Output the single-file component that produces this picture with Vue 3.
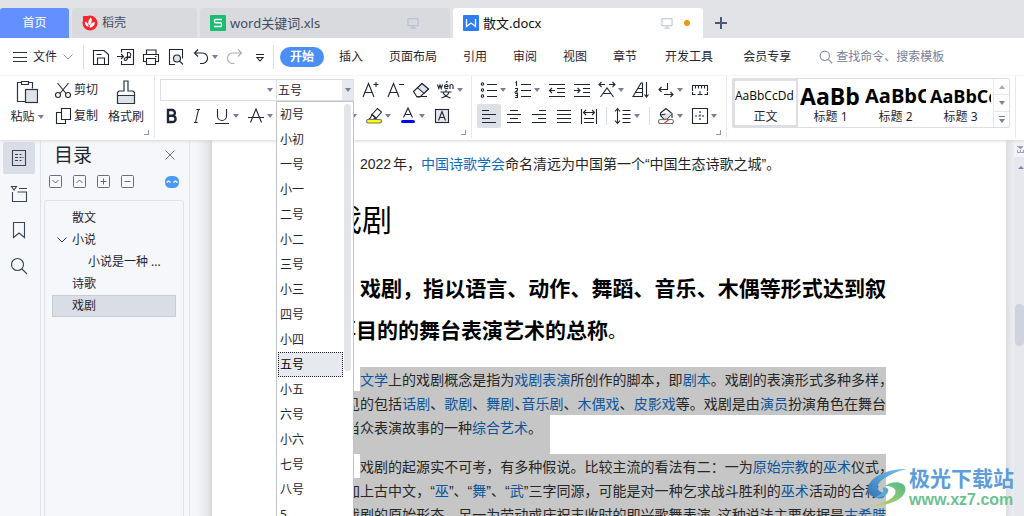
<script setup>
import { ref } from 'vue'

const icons = {
  save: '<path d="M1.500 16.500v-14h10.500l4.500 4v10z M5.500 16.500v-6.500h7v6.500 M4.500 6.500h5"/>',
  exportPdf: '<path d="M4.500 4.500v-3h12v15h-12v-3.500 M0 8.500h6.500 M4 6l2.500 2.500-2.500 2.500 M10.500 11v-6.500h1.500a2.300 2.300 0 0 1 0 4.500h-3 M10.500 9c0 5-4.500 4-3 1.500 .800-1.200 4-1.500 6.500-1"/>',
  print: '<path d="M4.500 6.500v-4.500h9.500v4.500 M4.500 13.500h-3v-7h15v7h-3 M4.500 10.500h9v6h-9z M13 8.500h1.500"/>',
  preview: '<path d="M8 16.500h-5.500v-15h13v9"/><circle cx="10" cy="10.500" r="3.500" fill="#dfe2e6"/><path d="M12.500 13l3.500 3.500"/>',
  undo: '<path d="M6 1.500l-3.500 3.500 3.500 3.500 M2.500 5h7a5 5 0 0 1 1.500 10.500h-3"/>',
  redo: '<path d="M12 1.500l3.500 3.500-3.500 3.500 M15.500 5h-8a5 5 0 0 0-1.500 10.500h2.500"/>',
  more: '<path d="M5 6.500h8 M6 9.500h6l-3 3.500z"/>',
  scissors: '<path d="M3.500 2l8.500 10.500 M14.500 2l-8.500 10.500"/><circle cx="4" cy="14" r="2.500"/><circle cx="14" cy="14" r="2.500"/>',
  copy: '<path d="M7.500 1.500h9v11h-9z M7.500 5.500h-5v11h9v-4"/>',
  grow: '<path d="M1 16l5.500-13.500 5.500 13.500 M3 11.500h7 M11.500 3.500h5 M14 1v5"/>',
  shrink: '<path d="M1 16l5.500-13.500 5.500 13.500 M3 11.500h7 M12 3.500h5"/>',
  eraser: '<path d="M1.500 10.500l8.500-8 6.500 5.500-8.500 8h-3z M5 15.500h10"/><path d="M5.500 6.800l4.500-4.300 6.500 5.500-4.500 4.300z" fill="#dfe2e6"/>',
  phonetic: '<path d="M.5 3.500l1.300 4 1.200-3.500 1.200 3.500 1.300-4 M7.500 5.500h3.500c0-2.800-3.500-2.500-3.500 0s2 2.800 3.500 1.500 M9 1.500l1.500-1.500 M13 8v-4.500 M13 5c0-2 3-2 3 0v3 M3.500 11h11 M9 9v2 M6 11.500c1.500 3 4 4.500 7.500 5.500 M12 11.500c-1.500 3-4 4.500-7.500 5.500"/>',
  bold: '<path d="M5 3v12h4.500a3 3 0 0 0 0-6.200h-4.500 4a2.900 2.900 0 0 0 0-5.800z" stroke-width="2.400"/>',
  italic: '<path d="M8.500 2.500h3.500 M6 15.500h3.500 M10.500 2.500l-3 13"/>',
  underline: '<path d="M4.500 2v7a4.500 4.500 0 0 0 9 0v-7 M2 16.500h14"/>',
  strike: '<path d="M3.500 15.500l5.500-13.500 5.500 13.500 M1 10.500h16"/>',
  superscript: '<path d="M2 5l8 10 M10 5l-8 10 M12 3c1-2 4-1 3 1l-3 4h4"/>',
  subscript: '<path d="M2 2l8 10 M10 2l-8 10 M12 12c1-2 4-1 3 1l-3 3h4"/>',
  effects: '<path d="M3 15.500l6-13 6 13 M5.500 10.500h7"/>',
  highlight: '<path d="M7 7.500l5.500-6 4 3.500-5.500 6.500z" fill="#fff"/><path d="M7 7.500l-1.500 3.500-2 1.500h4l3.500-1.500z"/><rect x="1.500" y="12.500" width="15" height="3.500" rx="1.700" fill="#ff0" stroke="#77746a"/>',
  fontColor: '<path d="M4.500 10.500l4.500-9.500 4.500 9.500 M6 7.500h6"/><rect x="2" y="13" width="14" height="3" rx="1.500" fill="#00f" stroke="none"/>',
  boxA: '<rect x="2.500" y="2.500" width="13" height="13" fill="#e3e6ea"/><path d="M5.500 13.500l3.500-9 3.500 9 M6.500 10.500h5"/>',
  bullets: '<circle cx="2.500" cy="3" r="1.200"/><circle cx="2.500" cy="9" r="1.200"/><circle cx="2.500" cy="15" r="1.200"/><path d="M7 3.500h10 M7 9.500h10 M7 15.500h10"/>',
  numbers: '<path d="M1.500 1.500l1-.7v4.200 M1 7.500h2.500v1.500l-2.200 2h2.500 M1 12.500h2.500v4h-2.500 M1.500 14.500h2 M7 3.500h10 M7 9.500h10 M7 15.500h10"/>',
  outdent: '<path d="M1 3.500h16 M9 7.500h8 M9 11.500h8 M1 15.500h16 M1 9.500h6 M4 7l-2.500 2.500 2.500 2.500"/>',
  indent: '<path d="M1 3.500h16 M10 7.500h7 M10 11.500h7 M1 15.500h16 M1 9.500h6 M4.500 7l2.500 2.500-2.500 2.500"/>',
  scale: '<path d="M1 3.500h6 M3.500 1l-2.500 2.500 2.500 2.500 M17 3.500h-6 M14.500 1l2.500 2.500-2.500 2.500 M2.500 16l6.500-9 6.500 9 M5 12.500h8"/>',
  sort: '<path d="M1 15.500l8-13.500h1.500v13.500z M3.500 11.500h7 M6 7.500h4.500 M14.500 1v15 M12.500 13.500l2 2.500 2-2.500"/>',
  wrap: '<path d="M10.500 2v6.500h-8.500 M4.500 6l-2.500 2.500 2.500 2.500 M7 13.500h9 M13.500 11l2.500 2.500-2.500 2.500"/>',
  ruler: '<path d="M1.500 10v-5.500h15v5.500 M4.500 4.500v3 M7.500 4.500v3 M10.500 4.500v3 M13.500 4.500v3 M1.500 11v2.500h3 M16.500 11v2.500h-3 M6.500 13.500h5 M9 10v3.500"/>',
  left: '<path d="M2 3.500h7 M2 7.500h14 M2 11.500h8 M2 15.500h14"/>',
  center: '<path d="M5 3.500h8 M2 7.500h14 M5 11.500h8 M2 15.500h14"/>',
  right: '<path d="M9 3.500h7 M2 7.500h14 M8 11.500h8 M2 15.500h14"/>',
  justify: '<path d="M2 3.500h14 M2 7.500h14 M2 11.500h14 M2 15.500h14"/>',
  distribute: '<path d="M1.500 2v15 M16.500 2v15 M4 5.500h10 M6 3l-2.500 2.500 2.500 2.500 M12 3l2.500 2.500-2.500 2.500 M4 11.500h10 M4 15.500h10"/>',
  spacing: '<path d="M3.500 2v14 M1 4.500l2.500-3 2.500 3 M1 13.500l2.500 3 2.500-3 M8.500 3.500h8 M8.500 7.500h8 M8.500 11.500h8 M8.500 15.500h8"/>',
  shading: '<path d="M3.500 6l5.500-4.500 6 5-5 5.500h-3l-3.500-3.500z" fill="#fff"/><path d="M4 7.500l9-1.500 2 .8-5 4.700h-3z" fill="#dfe2e6" stroke="none"/><path d="M15 7v4 M3.500 8l5-1"/><rect x="1.500" y="12.500" width="15" height="4" rx="2" fill="#fff" stroke="#77746a"/><path d="M7.500 16l4-3" stroke="#e33"/>',
  borders: '<path d="M1.500 1.500h15v15h-15z"/><path d="M9 4v10 M4 9h10" stroke-dasharray="2 1.500"/>',
  outline: '<path d="M2.500 1.500h13v15h-13z M5 5.500h3 M5 8.500h3 M5 11.500h3 M9.500 5.500h2 M9.500 8.500h2 M9.500 11.500h2 M12.500 8.500h1"/>',
  sections: '<path d="M1.500 1.500h5l-2.500 3.500z M9 3.500h8 M2.500 7v9.500h14v-9.500h-9"/>',
  bookmark: '<path d="M3.500 1.500h11v15l-5.500-4.500-5.500 4.500z"/>',
  search: '<circle cx="7.500" cy="7.500" r="6"/><path d="M12 12l5 5"/>',
  monitor: '<path d="M2.500 3.500h13v9h-13z M9 12.500v3 M5.500 15.500h7"/>',
}

const quick = [
  ['save', '保存'], ['exportPdf', '输出为PDF'], ['print', '打印'], ['preview', '打印预览'],
  ['undo', '撤销', true], ['redo', '恢复'], ['more', '更多'],
]
const menus = ['插入', '页面布局', '引用', '审阅', '视图', '章节']
const fontTop = [['grow', '增大字号'], ['shrink', '减小字号'], ['eraser', '清除格式'], ['phonetic', '拼音指南', true]]
const fontBottom = [
  ['bold', '加粗'], ['italic', '倾斜'], ['underline', '下划线', true], ['strike', '删除线', true],
  ['superscript', '上标'], ['subscript', '下标'], ['effects', '文字效果', true],
  ['highlight', '突出显示', true], ['fontColor', '字体颜色', true], ['boxA', '字符底纹'],
]
const paraTop = [
  ['bullets', '项目符号', true], ['numbers', '编号', true], ['outdent', '减少缩进'], ['indent', '增加缩进'],
  ['scale', '中文版式', true], ['sort', '排序'], ['wrap', '显示标记', true], ['ruler', '制表位'],
]
const paraBottom = [
  ['left', '左对齐'], ['center', '居中'], ['right', '右对齐'], ['justify', '两端对齐'], ['distribute', '分散对齐'],
  ['|'], ['spacing', '行距', true], ['|'], ['shading', '底纹', true], ['borders', '边框', true],
]
const styles = [
  ['AaBbCcDd', '正文', 's0'], ['AaBb', '标题 1', 's1'], ['AaBbC', '标题 2', 's2'], ['AaBbCc', '标题 3', 's3'],
]
const sizes = ['初号', '小初', '一号', '小一', '二号', '小二', '三号', '小三', '四号', '小四', '五号', '小五', '六号', '小六', '七号', '八号', '5']
const size = ref('五号')
const fontName = ref('')
const rail = [['outline', '目录'], ['sections', '章节'], ['bookmark', '书签'], ['search', '查找']]
const boxes = [
  ['M3.500 5l3 3 3-3', '展开'], ['M3.500 8l3-3 3 3', '收起'],
  ['M3.500 6.500h6 M6.500 3.500v6', '增加级别'], ['M3.500 6.500h6', '减少级别'],
]
</script>

<template>
  <div class="app">
    <header class="tabs">
      <button class="tab home">首页</button>
      <button class="tab docer">
        <svg class="logo" viewBox="0 0 16 16"><circle cx="8" cy="8" r="7.500" fill="#f5272f" /><path d="M1 1h7v7H1z" fill="#f5272f" /><path d="M6.500 12C3.500 11 2.500 8.500 3 6.500c2 .5 3.500 2.500 3.500 5.500zM7 10.500C5.500 7.500 6.500 4.500 9 2.500c1.500 3 .8 6-2 8zM7.500 12.500c0-3 2-5 5.200-5.500.3 3-1.700 5.500-5.200 5.500z" fill="#fff" /></svg>
        <span>稻壳</span>
      </button>
      <button class="tab file">
        <svg class="logo" viewBox="0 0 16 16"><rect width="16" height="16" rx="1" fill="#1abc73" /><path d="M12 4.500H5.500a1 1 0 0 0-1 1v1.300a1 1 0 0 0 1 1h5a1 1 0 0 1 1 1v1.700a1 1 0 0 1-1 1H4" fill="none" stroke="#fff" stroke-width="1.400" /></svg>
        <span>word关键词.xls</span>
        <svg class="ico mon" viewBox="0 0 18 18" v-html="icons.monitor"></svg>
      </button>
      <button class="tab file active">
        <svg class="logo" viewBox="0 0 16 16"><rect width="16" height="16" rx="1" fill="#2d7df6" /><path d="M3.500 4v7.500L8 8l4.500 3.500V4" fill="none" stroke="#fff" stroke-width="1.300" /></svg>
        <span>散文.docx</span>
        <svg class="ico mon" viewBox="0 0 18 18" v-html="icons.monitor"></svg>
        <i class="dot"></i>
      </button>
      <button class="plus" aria-label="新建"><svg viewBox="0 0 12 12"><path d="M6 0v12M0 6h12" stroke="#4d5874" stroke-width="2" /></svg></button>
    </header>

    <nav class="menu">
      <button class="filebtn">
        <svg class="burger" viewBox="0 0 14 10"><path d="M0 .5h14M0 5.500h14M0 9.500h14" /></svg>
        <span>文件</span>
        <svg class="chev" viewBox="0 0 10 6"><path d="M.5.5L5 5 9.500.5" /></svg>
      </button>
      <i class="vline"></i>
      <button v-for="q in quick" :key="q[0]" class="tool" :class="[q[0], { drop: q[2] }]" :aria-label="q[1]">
        <svg class="ico" viewBox="0 0 18 18" v-html="icons[q[0]]"></svg><i v-if="q[2]" class="arr"></i>
      </button>
      <i class="vline"></i>
      <button class="pill">开始</button>
      <button v-for="m in menus" :key="m" class="item">{{ m }}</button>
      <button class="item wide">开发工具</button>
      <button class="item wide">会员专享</button>
      <label class="find">
        <svg viewBox="0 0 18 18" v-html="icons.search"></svg>
        <input type="text" placeholder="查找命令、搜索模板" aria-label="查找命令" />
      </label>
    </nav>

    <section class="ribbon">
      <div class="group clip">
        <button class="big">
          <svg viewBox="0 0 22 24"><path d="M5.500 2.500h-4v19h8M12.500 2.500h4v6" /><path d="M5.500 1.500h7v3h-7z" /><rect x="9.500" y="9.500" width="12" height="13" fill="#dfe2e6" /></svg>
          <span class="lab">粘贴<i class="arr"></i></span>
        </button>
        <div class="pair">
          <button><svg class="ico" viewBox="0 0 18 18" v-html="icons.scissors"></svg>剪切</button>
          <button><svg class="ico" viewBox="0 0 18 18" v-html="icons.copy"></svg>复制</button>
        </div>
        <button class="big">
          <svg viewBox="0 0 22 24"><path d="M2.500 15.500v8h17v-8z" fill="#dfe2e6" /><path d="M2.500 15.500v-3l1.500-1.500h5v-10h4v10h5l1.500 1.500v3" /></svg>
          <span class="lab">格式刷</span>
        </button>
        <i class="corner"></i>
      </div>

      <div class="group fonts">
        <div class="row">
          <div class="combos">
            <div class="combo name"><input v-model="fontName" type="text" aria-label="字体" /><i class="arr"></i></div>
            <div class="combo size">
              <input v-model="size" type="text" aria-label="字号" />
              <button aria-label="字号列表"><i class="arr"></i></button>
              <div class="list" role="listbox" aria-label="字号">
                <div class="opts">
                  <button v-for="s in sizes" :key="s" role="option" :aria-selected="s === size" :class="{ on: s === size }" @click="size = s">{{ s }}</button>
                </div>
                <i class="bar"></i>
              </div>
            </div>
          </div>
          <button v-for="b in fontTop" :key="b[0]" class="tool" :class="{ drop: b[2] }" :aria-label="b[1]">
            <svg class="ico" viewBox="0 0 18 18" v-html="icons[b[0]]"></svg><i v-if="b[2]" class="arr"></i>
          </button>
        </div>
        <div class="row">
          <button v-for="b in fontBottom" :key="b[0]" class="tool" :class="{ drop: b[2] }" :aria-label="b[1]">
            <svg class="ico" viewBox="0 0 18 18" v-html="icons[b[0]]"></svg><i v-if="b[2]" class="arr"></i>
          </button>
        </div>
        <i class="corner"></i>
      </div>

      <div class="group">
        <div class="row">
          <button v-for="b in paraTop" :key="b[0]" class="tool" :class="{ drop: b[2] }" :aria-label="b[1]">
            <svg class="ico" viewBox="0 0 18 18" v-html="icons[b[0]]"></svg><i v-if="b[2]" class="arr"></i>
          </button>
        </div>
        <div class="row">
          <template v-for="(b, i) in paraBottom" :key="i">
            <i v-if="b[0] === '|'" class="sep"></i>
            <button v-else class="tool" :class="{ drop: b[2], on: b[0] === 'left' }" :aria-label="b[1]">
              <svg class="ico" viewBox="0 0 18 18" v-html="icons[b[0]]"></svg><i v-if="b[2]" class="arr"></i>
            </button>
          </template>
        </div>
        <i class="corner"></i>
      </div>

      <div class="group last">
        <div class="gallery">
          <button v-for="(s, i) in styles" :key="s[1]" class="style" :class="{ on: i === 0 }">
            <span class="sample" :class="s[2]">{{ s[0] }}</span><span class="cap">{{ s[1] }}</span>
          </button>
          <div class="scroller">
            <button aria-label="上一行"><i class="arr up"></i></button>
            <button aria-label="下一行"><i class="arr"></i></button>
            <button aria-label="更多样式"><i class="dash"></i><i class="arr"></i></button>
          </div>
        </div>
      </div>
    </section>

    <main class="body">
      <aside class="rail">
        <button v-for="(r, i) in rail" :key="r[0]" :class="{ on: i === 0 }" :aria-label="r[1]">
          <svg class="ico" viewBox="0 0 18 18" v-html="icons[r[0]]"></svg>
        </button>
      </aside>

      <aside class="panel">
        <div class="head">
          <h2>目录</h2>
          <button aria-label="关闭"><svg class="x" viewBox="0 0 10 10"><path d="M.5.5l9 9M9.500.5l-9 9" /></svg></button>
        </div>
        <div class="acts">
          <button v-for="b in boxes" :key="b[1]" :aria-label="b[1]"><svg class="bx" viewBox="0 0 13 13"><rect x=".5" y=".5" width="12" height="12" rx="1" /><path :d="b[0]" /></svg></button>
          <button class="bot" aria-label="智能识别目录"><svg viewBox="0 0 14 12"><rect width="14" height="12" rx="5.500" fill="#4a9af5" /><path d="M1.500 6.500l2-1.500 2 1.500M8.500 6.500l2-1.500 2 1.500" fill="none" stroke="#fff" stroke-width="1.300" /></svg></button>
        </div>
        <ul class="tree">
          <li>散文</li>
          <li><svg class="exp" viewBox="0 0 10 6"><path d="M.5.5L5 5 9.500.5" /></svg>小说</li>
          <li class="sub">小说是一种 ...</li>
          <li>诗歌</li>
          <li class="on">戏剧</li>
        </ul>
      </aside>

      <div class="canvas">
        <article class="page">
          <p class="first">2022年，<a href="#">中国诗歌学会</a>命名清远为中国第一个“中国生态诗歌之城”。</p>
          <h1>戏剧</h1>
          <h3><span class="ln in">戏剧，指以语言、动作、舞蹈、音乐、木偶等形式达到叙</span><span class="ln2">事目的的舞台表演艺术的总称<b>。</b></span></h3>
          <p class="sel">
            <span class="ln in"><a href="#">文学</a>上的戏剧概念是指为<a href="#">戏剧表演</a>所创作的脚本，即<a href="#">剧本</a>。戏剧的表演形式多种多样<i>，</i></span>
            <span class="ln">常见的包括<a href="#">话剧</a>、<a href="#">歌剧</a>、<a href="#">舞剧</a><i>、</i><a href="#">音乐剧</a>、<a href="#">木偶戏</a>、<a href="#">皮影戏</a>等。戏剧是由<a href="#">演员</a>扮演角色在舞台</span>
            <span class="end">上当众表演故事的一种<a href="#">综合艺术</a>。</span>
          </p>
          <p class="sel">
            <span class="ln in">戏剧的起源实不可考，有多种假说。比较主流的看法有二：一为<a href="#">原始宗教</a>的<a href="#">巫术</a>仪式<i>，</i></span>
            <span class="ln">再加上古中文，“<a href="#">巫</a>”、“<a href="#">舞</a>”、“<a href="#">武</a>”三字同源，可能是对一种乞求战斗胜利的<a href="#">巫术</a>活动的合称<i>，</i></span>
            <span class="ln">即戏剧的原始形态。另一为劳动或庆祝丰收时的即兴歌舞表演<i>，</i>这种说法主要依据是<a href="#">古希腊</a></span>
          </p>
        </article>
        <div class="edge"></div>
        <div class="vbar">
          <svg viewBox="0 0 10 34"><path d="M0 0h10v17H0z" fill="#f3f4f8" /><path d="M3 6.500h6M3 12.500h7M3.500 10v2M6.500 10v2M9.500 10v2" stroke="#9aa4bd" fill="none" /><path d="M4 7h5l-2.500 2.500z" fill="#9aa4bd" /><path d="M4 29l3-3 3 3z" fill="#7b88a8" /></svg>
          <i class="thumb"></i>
        </div>
      </div>

      <div class="mark">
        <svg viewBox="0 0 44 44">
          <defs>
            <linearGradient id="mb" x1="0" y1="1" x2="1" y2="0"><stop offset="0" stop-color="#2f74b5" /><stop offset="1" stop-color="#7cc4ee" /></linearGradient>
            <linearGradient id="mg" x1="0" y1="1" x2="1" y2="0"><stop offset="0" stop-color="#c7d65a" /><stop offset="1" stop-color="#4fb98a" /></linearGradient>
          </defs>
          <path d="M43 2C22 2 4 10 2 22c-1 6 4 10 12 11 6 0 8-4 3-6-7-3-6-10 2-15 6-4 14-8 24-10z" fill="url(#mb)" />
          <path d="M20 20c5-5 18-6 21 1 3 10-14 21-36 19 14-1 26-8 26-14 0-4-5-6-11-6z" fill="url(#mg)" />
          <path d="M2 37c6-7 15-3 20-9 3-4 1-8-5-6 5 6-7 8-15 15z" fill="#5aa7d8" />
        </svg>
        <div><strong>极光下载站</strong><span>www.xz7.com</span></div>
      </div>
    </main>
  </div>
</template>

<style>
html, body { margin: 0; background: #f6f7fa; }
</style>

<style scoped>
.app { height: 100vh; overflow: hidden; display: flex; flex-direction: column; font: 12px/16px "Noto Sans", "Noto Sans CJK SC", sans-serif; color: #1f2633; }
button, input { font: inherit; color: inherit; border: 0; padding: 0; margin: 0; background: none; outline: 0; min-width: 0; }
button { display: flex; align-items: center; white-space: nowrap; flex-shrink: 0; }
i { font-style: normal; }
svg { display: block; flex-shrink: 0; fill: none; stroke: #2b3445; }
.ico { width: 18px; height: 18px; fill: none; stroke: currentColor; stroke-width: 1.1; }
.arr { width: 0; height: 0; border: 3px solid transparent; border-top: 4px solid #76809a; border-bottom: 0; flex-shrink: 0; }
.arr.up { border-bottom: 4px solid #a8adbb; border-top: 0; }

.tabs { height: 38px; flex-shrink: 0; background: #e2e3e7; display: flex; align-items: flex-end; }
.tab { height: 30px; background: #d8dade; border-radius: 3px 3px 0 0; margin-right: 3px; color: #434c61; gap: 4px; }
.tab svg { stroke: none; }
.tab.home { width: 69px; justify-content: center; background: #6390ff; color: #fff; }
.tab.docer { width: 125px; padding-left: 10px; }
.tab.file { width: 250px; padding-left: 10px; font-size: 13px; }
.tab.active { background: #fff; color: #111; }
.logo { width: 16px; height: 16px; }
.tab .mon { width: 14px; height: 14px; stroke: #b0b7cb; margin-left: auto; margin-right: 30px; }
.tab.active .mon { margin-right: 6px; }
.dot { width: 6px; height: 6px; border-radius: 3px; background: #e69a0d; margin-right: 13px; }
.plus { height: 30px; padding-left: 9px; }
.plus svg { width: 12px; height: 12px; }

.menu { height: 38px; flex-shrink: 0; background: #fff; display: flex; align-items: center; padding-left: 13px; }
.filebtn { gap: 6px; }
.burger { width: 14px; height: 10px; }
.chev { width: 10px; height: 6px; stroke: #8a909c; }
.vline { width: 1px; height: 24px; background: #dcdee3; margin-left: 10px; margin-right: 5px; }
.more + .vline { margin-left: 0; margin-right: 6px; }
.tool { width: 24px; height: 24px; margin-right: 1px; padding-left: 3px; border-radius: 2px; }
.tool.drop { width: 34px; margin-right: 0; }
.tool .arr { margin-left: 2px; }
.tool.on { background: #dde1e6; }
.tool.redo { color: #a9aeb8; }
.pill { width: 44px; height: 20px; border-radius: 10px; background: #4a8ff5; color: #fff; font-weight: bold; justify-content: center; margin-right: 2px; }
.item { padding: 0 13px; height: 24px; }
.item.wide { padding: 0 15px; }
.find { display: flex; align-items: center; gap: 3px; margin-left: 13px; color: #76809a; flex: 1; }
.find svg { width: 14px; height: 14px; stroke: #8a93ab; stroke-width: 1.5; }
.find input { width: 120px; }
.find input::placeholder { color: #76809a; opacity: 1; }

.ribbon { height: 64px; flex-shrink: 0; background: #fff; display: flex; position: relative; z-index: 2; box-shadow: 0 1px 3px #d3d5da; }
.group { position: relative; padding: 1px 4px 0 5px; border-right: 1px solid #e6e8ec; box-sizing: border-box; height: 62px; }
.group.fonts { padding-right: 3px; }
.row { display: flex; align-items: center; height: 26px; }
.group.clip { display: flex; padding: 0 10px 0 9px; }
.big { width: 36px; flex-direction: column; align-items: center; padding-top: 4px; justify-content: flex-start; }
.big svg { width: 22px; height: 24px; stroke-width: 1.2; }
.lab { display: flex; align-items: center; gap: 3px; margin-top: 5px; }
.pair { margin: 1px 10px 0 9px; }
.pair button { height: 26px; gap: 2px; }
.corner { position: absolute; right: 5px; bottom: 3px; width: 4px; height: 4px; border: solid #8d96ab; border-width: 0 1px 1px 0; }
.sep { width: 1px; height: 18px; background: #dcdee3; margin: 0 4px; }

.combos { display: flex; margin-right: 5px; }
.combo { height: 22px; display: flex; align-items: center; box-sizing: border-box; border: 1px solid #dcdee3; }
.combo.name { width: 116px; padding-right: 3px; border-right: 0; }
.combo.name input { flex: 1; height: 20px; }
.combo.size { width: 78px; position: relative; }
.combo.size input { width: 65px; height: 20px; padding-left: 1px; box-sizing: border-box; }
.combo.size > button { flex: 1; height: 20px; background: #e6e9ef; justify-content: center; }
.list { position: absolute; z-index: 5; left: -1px; right: -1px; top: 21px; height: 440px; background: #fff; border: 1px solid #bfc3cb; display: flex; box-sizing: border-box; }
.opts { flex: 1; padding-left: 1px; }
.opts button { width: 100%; height: 25px; padding-left: 1px; border: 1px solid transparent; box-sizing: border-box; }
.opts .on { background: #e6e9ef; border: 1px dotted #222; color: #000; }
.bar { width: 7px; height: 267px; margin: 2px 2px 0 1px; border-radius: 4px; background: #e4e5e8; }

.last { padding: 2px 5px 0 5px; }
.gallery { display: flex; height: 50px; border: 1px solid #dcdee3; box-sizing: border-box; border-radius: 2px; }
.style { width: 65px; flex-direction: column; border: 2px solid transparent; box-sizing: border-box; align-items: stretch; overflow: hidden; }
.style.on { border-color: #dddfe5; }
.sample { height: 28px; line-height: 30px; overflow: hidden; text-align: left; color: #000; font-family: "Open Sans", sans-serif; font-weight: bold; }
.s0 { font-size: 12px; font-weight: normal; }
.s1 { font-size: 23px; }
.s2 { font-size: 20px; }
.s3 { font-size: 18px; }
.cap { text-align: center; line-height: 17px; }
.scroller { width: 15px; border-left: 1px solid #e6e8ec; display: flex; flex-direction: column; }
.scroller button { flex: 1; flex-direction: column; justify-content: center; gap: 2px; border-bottom: 1px solid #e6e8ec; }
.scroller button:last-child { border: 0; }
.dash { width: 6px; height: 1px; background: #76809a; }

.body { flex: 1; min-height: 0; display: flex; position: relative; background: #f6f7fa; overflow: hidden; }
.rail { width: 41px; border-right: 1px solid #e1e3e8; padding: 2px 0 0 3px; box-sizing: border-box; color: #39435a; }
.rail button { width: 32px; height: 32px; justify-content: center; margin-bottom: 4px; border-radius: 2px; }
.rail .on { background: #d9dde5; }
.panel { width: 140px; border-right: 1px solid #e1e3e8; padding: 0 5px 0 3px; display: flex; flex-direction: column; }
.head { display: flex; justify-content: space-between; align-items: center; height: 30px; padding: 0 9px 0 10px; }
.head h2 { margin: 0; font-size: 19px; font-weight: normal; }
.x { width: 10px; height: 10px; stroke: #6b7280; }
.acts { display: flex; gap: 11px; height: 23px; align-items: center; padding: 0 5px; }
.bx { width: 13px; height: 13px; stroke: #666c78; }
.bot { margin-left: auto; }
.bot svg { width: 14px; height: 12px; stroke: none; }
.tree { flex: 1; list-style: none; margin: 7px 0 0; padding: 6px 7px; border: 1px solid #e1e3e8; border-bottom: 0; border-radius: 3px 3px 0 0; }
.tree li { height: 22px; display: flex; align-items: center; padding-left: 20px; position: relative; box-sizing: border-box; }
.tree .sub { padding-left: 36px; }
.tree .on { background: #d9dde5; border: 1px solid #c6ccd8; padding-left: 19px; }
.exp { width: 10px; height: 6px; position: absolute; left: 5px; }

.canvas { flex: 1; min-width: 0; display: flex; background: linear-gradient(90deg, #f6f7fa 6px, #e4e6e8 18px, #d3d5d7 22px); padding-left: 22px; }
.page { flex: 1; min-width: 0; background: #fff; padding: 12px 120px 0; overflow: hidden; font: 14px/24px "Liberation Sans", "Noto Sans CJK SC", sans-serif; color: #262626; white-space: nowrap; }
.page p { margin: 0; }
.page a { color: #0f6bbd; text-decoration: none; }
.page .first { padding-left: 28px; text-autospace: normal; }
.page h1 { margin: 25px 0 27px; font-size: 30px; font-weight: normal; line-height: 40px; color: #000; }
.page h3 { margin: 0 0 14px; font-size: 21px; line-height: 42px; color: #000; }
.page h3 b { font-weight: normal; font-size: 18px; }
.ln { display: block; text-align: justify; text-align-last: justify; }
.ln2 { display: block; padding-left: 3px; }
.in { margin-left: 28px; }
.sel { line-height: 22px; }
.sel .ln { background: #c6c6c6; padding-top: 2px; }
.sel a { color: #0d559b; }
.sel i { font-feature-settings: "halt"; }
.end { display: block; width: 218px; padding: 2px 0 15px; background: #c6c6c6; }
.edge { width: 8px; background: linear-gradient(90deg, #dcdee1, #eceef2); }
.vbar { width: 10px; background: #e6e8ee; }
.vbar svg { width: 10px; height: 34px; stroke: none; }
.thumb { display: block; height: 42px; margin: 130px 0 0 1px; border-radius: 5px; background: #cfd3de; }

.mark { position: absolute; right: 10px; bottom: 6px; display: flex; align-items: center; gap: 1px; }
.mark svg { width: 42px; height: 44px; stroke: none; }
.mark div { display: flex; flex-direction: column; }
.mark strong { font-size: 21px; line-height: 24px; color: #5c9dda; }
.mark span { font: bold 16px/20px "Liberation Sans", sans-serif; color: #6cc193; }
</style>
